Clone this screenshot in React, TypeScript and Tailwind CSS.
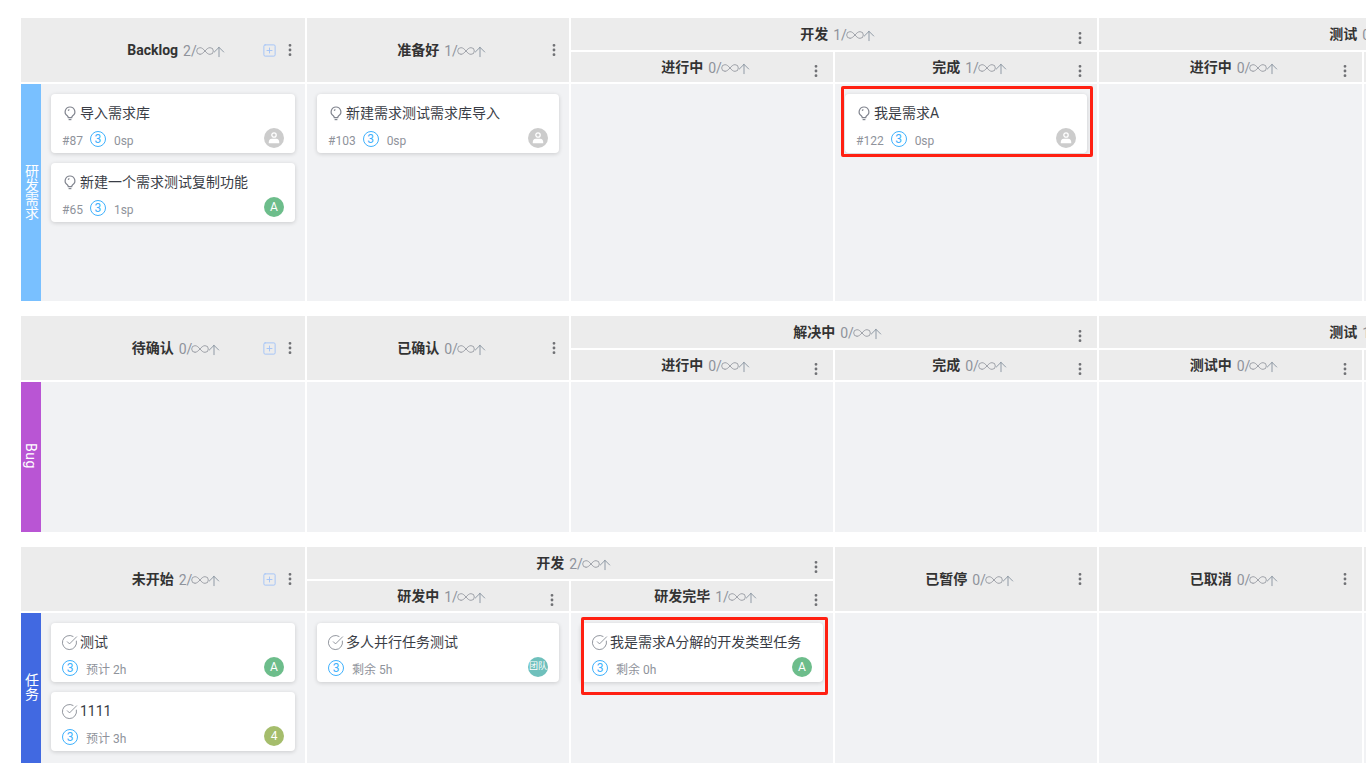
import React from "react";
import { ArrowUp, CircleCheckBig, EllipsisVertical, Infinity as InfinityIcon, SquarePlus } from "lucide-react";

// small counter next to each column title: "2/∞↑"
const Count = ({ value }: { value: number }) => (
  <span className="ml-[5px] mt-[2px] flex items-center text-sm font-normal text-[#8f939b]">
    {value}/
    <InfinityIcon size={20} strokeWidth={1} className="-ml-[2px]" />
    <ArrowUp size={16} strokeWidth={1.25} className="-ml-[4px] -mr-[4px] mt-[1px] text-[#7d8a98]" />
  </span>
);

interface HeaderProps {
  title?: string;
  count?: number;
  className?: string;
  first?: boolean;
  low?: boolean;
  tight?: boolean;
}

const Header: React.FC<HeaderProps> = ({ title, count, className = "", first, low, tight }) => (
  <div className={`grid grid-cols-[1fr_auto_1fr] items-center bg-[#ececec] ${first ? "pl-[24px]" : "pl-[5px]"} ${className}`}>
    <div />
    {title ? (
      <div className="flex items-center text-sm font-bold text-[#333]">
        {title}
        <Count value={count ?? 0} />
      </div>
    ) : (
      <div />
    )}
    {title ? (
      <div className={`flex items-center justify-end ${first || tight ? "pr-[7px]" : "pr-[9px]"} ${low ? "mt-2" : ""}`}>
        {first && <SquarePlus size={15} strokeWidth={1.5} className="mr-[5px] text-[#a3c3f7]" />}
        <EllipsisVertical size={16} strokeWidth={2.25} className="text-[#6f7074]" />
      </div>
    ) : (
      <div />
    )}
  </div>
);

const Bulb = () => (
  <svg width="14" height="15" viewBox="0 0 14 15" fill="none" stroke="#80848e" strokeWidth="1.2" className="mt-[2px] shrink-0">
    <path d="M7 1a4.8 4.8 0 0 0-2.7 8.8c.6.5.9 1 1 1.9h3.4c.1-.9.4-1.4 1-1.9A4.8 4.8 0 0 0 7 1z" />
    <path d="M5.6 13.6h2.8" />
    <path d="M5.2 4.8c.2-.6.6-1 1.2-1.1" />
  </svg>
);

const Three = () => (
  <span className="mt-[3px] flex h-4 w-4 shrink-0 items-center justify-center rounded-full border border-[#3fb1fd] text-xs leading-none text-[#3fb1fd]">
    3
  </span>
);

interface CardProps {
  title: string;
  num?: string;
  meta: string;
  avatar?: string;
  avatarColor?: string;
  task?: boolean;
}

const Card: React.FC<CardProps> = ({ title, num, meta, avatar, avatarColor, task }) => (
  <div className="h-[59px] rounded bg-white pl-[11px] pr-[11px] pt-[10px] shadow-[0_1px_4px_rgba(0,0,0,0.16)]">
    <div className="flex h-[17px] items-center text-sm text-[#3a3d46]">
      <span className="flex w-[18px] shrink-0 pl-px">
        {task ? <CircleCheckBig size={17} strokeWidth={1.2} className="-ml-[2px] mt-[2px] text-[#80848e]" /> : <Bulb />}
      </span>
      <span className="whitespace-nowrap">{title}</span>
    </div>
    <div className="mt-[7px] flex h-5 items-center justify-between">
      <div className="flex h-5 items-start text-xs text-[#8f939b]">
        {num && <span className="mr-[7px] mt-[5px] leading-4">{num}</span>}
        <Three />
        <span className="ml-[8px] mt-[5px] leading-4">{meta}</span>
      </div>
      {avatar === "user" ? (
        <span className="flex h-5 w-5 items-center justify-center rounded-full bg-[#cccccc]">
          <svg width="12" height="12" viewBox="0 0 12 12" fill="none" stroke="#fff" strokeWidth="1.3">
            <circle cx="6" cy="3" r="2.2" />
            <path d="M1.4 10.6c0-2.2 1-3.2 2.4-3.2h4.4c1.4 0 2.4 1 2.4 3.2z" fill="#fff" />
          </svg>
        </span>
      ) : (
        <span className={`flex h-5 w-5 items-center justify-center rounded-full text-white ${avatar === "团队" ? "text-[9px]" : "text-xs"} ${avatarColor}`}>
          {avatar}
        </span>
      )}
    </div>
  </div>
);

const Body = ({ children }: { children?: React.ReactNode }) => (
  <div className="relative flex flex-col gap-[10px] bg-[#f1f2f4] p-[10px]">{children}</div>
);

const Lane = ({ label, color, children }: { label: string; color: string; children?: React.ReactNode }) => (
  <div className="flex bg-[#f1f2f4]">
    <div className={`flex w-5 shrink-0 items-center justify-center pb-[2px] text-sm leading-[14px] text-white ${color}`}>
      <span className={`[writing-mode:vertical-rl] ${label === "Bug" ? "tracking-[0.5px]" : ""}`}>{label}</span>
    </div>
    <div className="flex min-w-0 flex-1 flex-col gap-[10px] p-[10px]">{children}</div>
  </div>
);

// red annotation box sitting on top of a card
const Mark = ({ className }: { className: string }) => (
  <div className={`pointer-events-none absolute rounded-[2px] border-[3px] border-[#ff2012] ${className}`} />
);

const colsClass = "grid grid-cols-[284px_262px_262px_262px_263px_263px] gap-[2px]";

export default function App() {
  return (
    <div className="h-[770px] w-[1366px] overflow-hidden bg-white pl-[21px] pt-[18px] font-['Roboto','Noto_Sans_CJK_SC',sans-serif]">
      {/* 研发需求 */}
      <section className={`${colsClass} grid-rows-[32px_30px_217px]`}>
        <Header first title="Backlog" count={2} className="row-span-2" />
        <Header tight title="准备好" count={1} className="row-span-2" />
        <Header title="开发" count={1} className="col-span-2" low />
        <Header title="测试" count={0} className="col-span-2" low />
        <Header title="进行中" count={0} low />
        <Header title="完成" count={1} low />
        <Header title="进行中" count={0} low />
        <Header />
        <Lane label="研发需求" color="bg-[#79c0ff]">
          <Card title="导入需求库" num="#87" meta="0sp" avatar="user" />
          <Card title="新建一个需求测试复制功能" num="#65" meta="1sp" avatar="A" avatarColor="bg-[#6dbd8b]" />
        </Lane>
        <Body>
          <Card title="新建需求测试需求库导入" num="#103" meta="0sp" avatar="user" />
        </Body>
        <Body />
        <Body>
          <Card title="我是需求A" num="#122" meta="0sp" avatar="user" />
          <Mark className="left-[6px] top-[2px] h-[71px] w-[252px]" />
        </Body>
        <Body />
        <Body />
      </section>

      {/* Bug */}
      <section className={`${colsClass} mt-[15px] grid-rows-[32px_30px_150px]`}>
        <Header first title="待确认" count={0} className="row-span-2" />
        <Header tight title="已确认" count={0} className="row-span-2" />
        <Header title="解决中" count={0} className="col-span-2" low />
        <Header title="测试" count={1} className="col-span-2" low />
        <Header title="进行中" count={0} low />
        <Header title="完成" count={0} low />
        <Header title="测试中" count={0} low />
        <Header />
        <Lane label="Bug" color="bg-[#b955d4]" />
        <Body />
        <Body />
        <Body />
        <Body />
        <Body />
      </section>

      {/* 任务 */}
      <section className={`${colsClass} mt-[15px] grid-rows-[32px_30px_150px]`}>
        <Header first title="未开始" count={2} className="row-span-2" />
        <Header title="开发" count={2} className="col-span-2" low />
        <Header title="已暂停" count={0} className="row-span-2" />
        <Header title="已取消" count={0} className="row-span-2" />
        <Header className="row-span-2" />
        <Header title="研发中" count={1} low />
        <Header title="研发完毕" count={1} low />
        <Lane label="任务" color="bg-[#4169e1]">
          <Card task title="测试" meta="预计 2h" avatar="A" avatarColor="bg-[#6dbd8b]" />
          <Card task title="1111" meta="预计 3h" avatar="4" avatarColor="bg-[#a5bd6c]" />
        </Lane>
        <Body>
          <Card task title="多人并行任务测试" meta="剩余 5h" avatar="团队" avatarColor="bg-[#6fc0bc]" />
        </Body>
        <Body>
          <Card task title="我是需求A分解的开发类型任务" meta="剩余 0h" avatar="A" avatarColor="bg-[#6dbd8b]" />
          <Mark className="left-[10px] top-[4px] h-[78px] w-[247px]" />
        </Body>
        <Body />
        <Body />
        <Body />
      </section>
    </div>
  );
}
